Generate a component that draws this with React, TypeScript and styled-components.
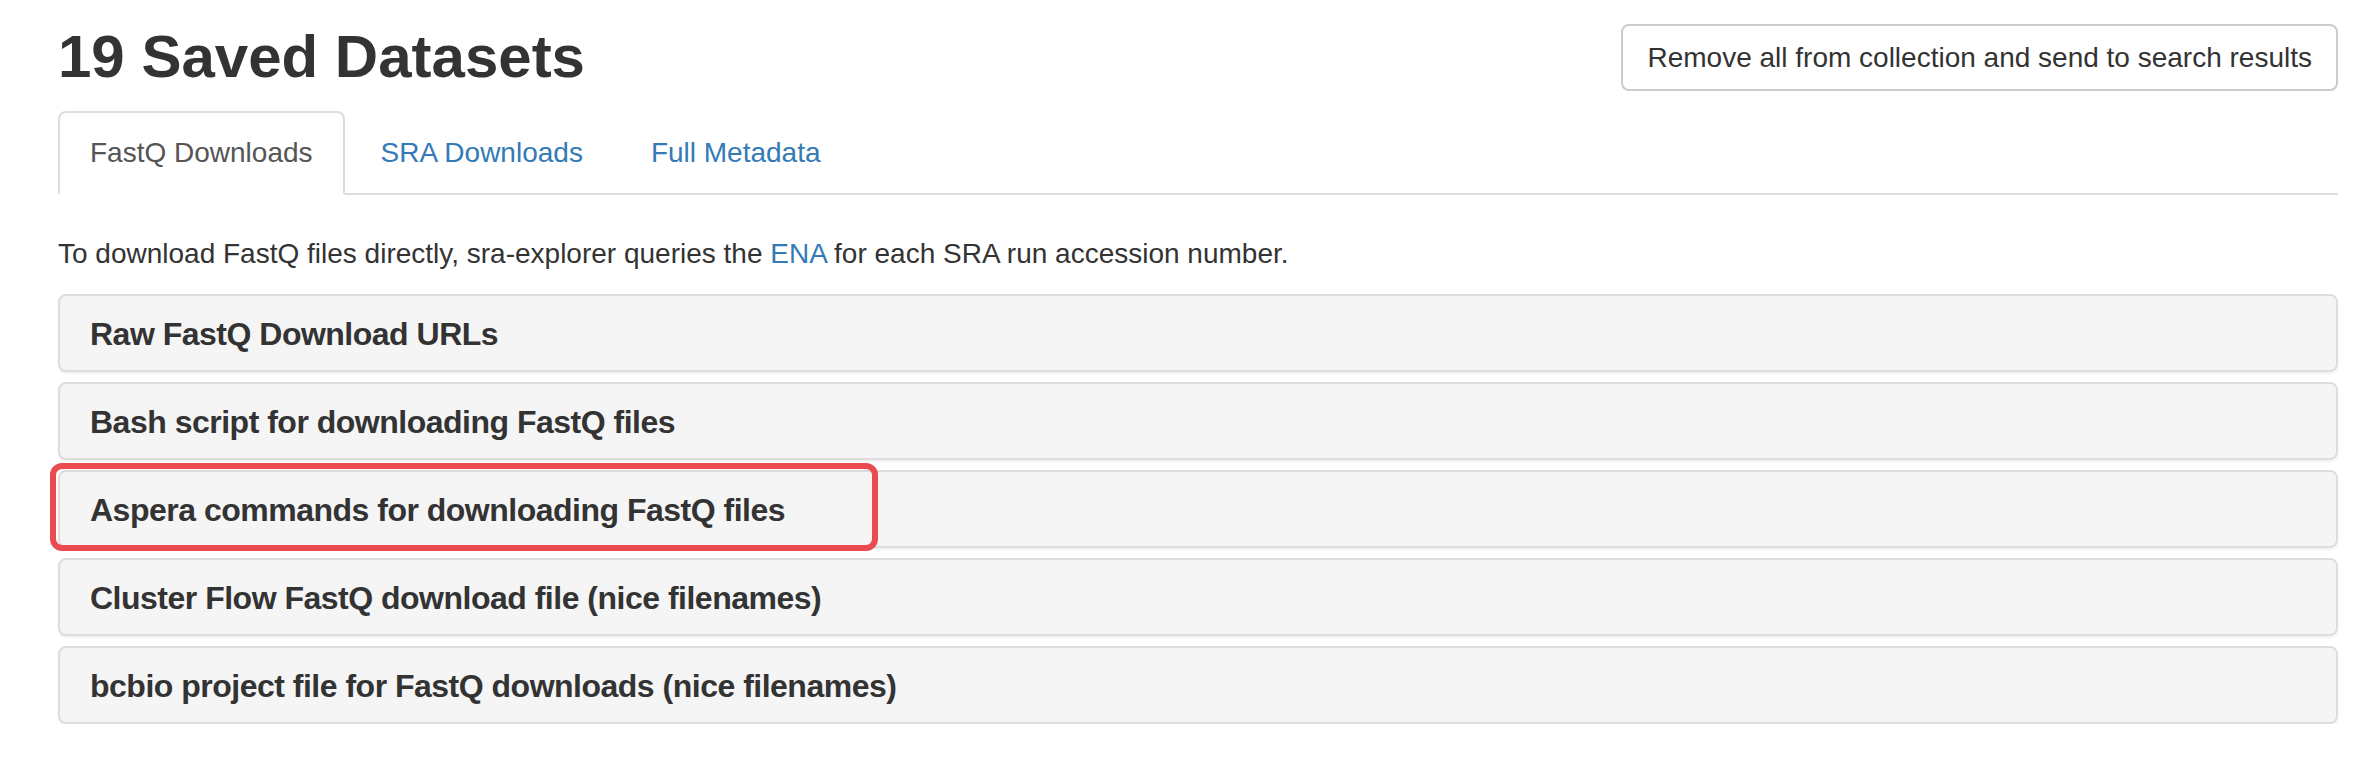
import React from 'react';
import styled, { createGlobalStyle } from 'styled-components';

const GlobalStyle = createGlobalStyle`
    html,
    body {
        margin: 0;
        padding: 0;
        background: #fff;
    }
    body {
        font-family: 'Liberation Sans', Arial, Helvetica, sans-serif;
        font-size: 28px;
        line-height: 40px;
        color: #333;
    }
`;

const Page = styled.div`
    padding: 24px 42px 0 58px;
`;

const Header = styled.div`
    display: flex;
    justify-content: space-between;
    align-items: flex-start;
    margin-bottom: 20px;
`;

const Title = styled.h1`
    margin: 0;
    font-size: 60px;
    line-height: 66px;
    font-weight: 700;
    color: #333;
`;

const Button = styled.button`
    box-sizing: border-box;
    height: 67px;
    padding: 0 24px;
    border: 2px solid #ccc;
    border-radius: 8px;
    background: #fff;
    color: #333;
    font-family: inherit;
    font-size: 28px;
    line-height: 40px;
    cursor: pointer;
`;

const TabList = styled.ul`
    display: flex;
    margin: 0;
    padding: 0;
    list-style: none;
    border-bottom: 2px solid #ddd;
`;

const Tab = styled.li<{ $active?: boolean }>`
    margin: 0 4px -2px 0;
    padding: 20px 30px;
    border: 2px solid ${(p) => (p.$active ? '#ddd' : 'transparent')};
    border-bottom-color: transparent;
    border-radius: 8px 8px 0 0;
    background: ${(p) => (p.$active ? '#fff' : 'transparent')};
    color: ${(p) => (p.$active ? '#555' : '#337ab7')};
    cursor: pointer;
`;

const TabContent = styled.div`
    padding-top: 39px;
`;

const Intro = styled.p`
    margin: 0 0 20px;
`;

const Link = styled.a`
    color: #337ab7;
    text-decoration: none;
`;

const PanelGroup = styled.div`
    display: flex;
    flex-direction: column;
    gap: 10px;
`;

const Panel = styled.div`
    position: relative;
    padding: 21px 30px 19px;
    border: 2px solid #ddd;
    border-radius: 8px;
    background: #f5f5f5;
    box-shadow: 0 2px 2px rgba(0, 0, 0, 0.05);
`;

const PanelTitle = styled.h4`
    margin: 0;
    font-size: 32px;
    line-height: 34px;
    font-weight: 700;
    letter-spacing: -0.5px;
    color: #333;
`;

// annotation drawn over the screenshot
const Highlight = styled.div`
    position: absolute;
    left: -10px;
    top: -9px;
    width: 828px;
    height: 88px;
    box-sizing: border-box;
    border: 6px solid #e94b4f;
    border-radius: 12px;
    pointer-events: none;
`;

const tabs = ['FastQ Downloads', 'SRA Downloads', 'Full Metadata'];

const panels = [
    { title: 'Raw FastQ Download URLs' },
    { title: 'Bash script for downloading FastQ files' },
    { title: 'Aspera commands for downloading FastQ files', highlight: true },
    { title: 'Cluster Flow FastQ download file (nice filenames)' },
    { title: 'bcbio project file for FastQ downloads (nice filenames)' },
];

const App = () => {
    return (
        <Page>
            <GlobalStyle />
            <Header>
                <Title>19 Saved Datasets</Title>
                <Button>Remove all from collection and send to search results</Button>
            </Header>
            <TabList>
                {tabs.map((label, index) => (
                    <Tab key={label} $active={index === 0}>
                        {label}
                    </Tab>
                ))}
            </TabList>
            <TabContent>
                <Intro>
                    To download FastQ files directly, sra-explorer queries the <Link href="#">ENA</Link> for
                    each SRA run accession number.
                </Intro>
                <PanelGroup>
                    {panels.map((panel) => (
                        <Panel key={panel.title}>
                            <PanelTitle>{panel.title}</PanelTitle>
                            {panel.highlight && <Highlight />}
                        </Panel>
                    ))}
                </PanelGroup>
            </TabContent>
        </Page>
    );
};

export default App;
